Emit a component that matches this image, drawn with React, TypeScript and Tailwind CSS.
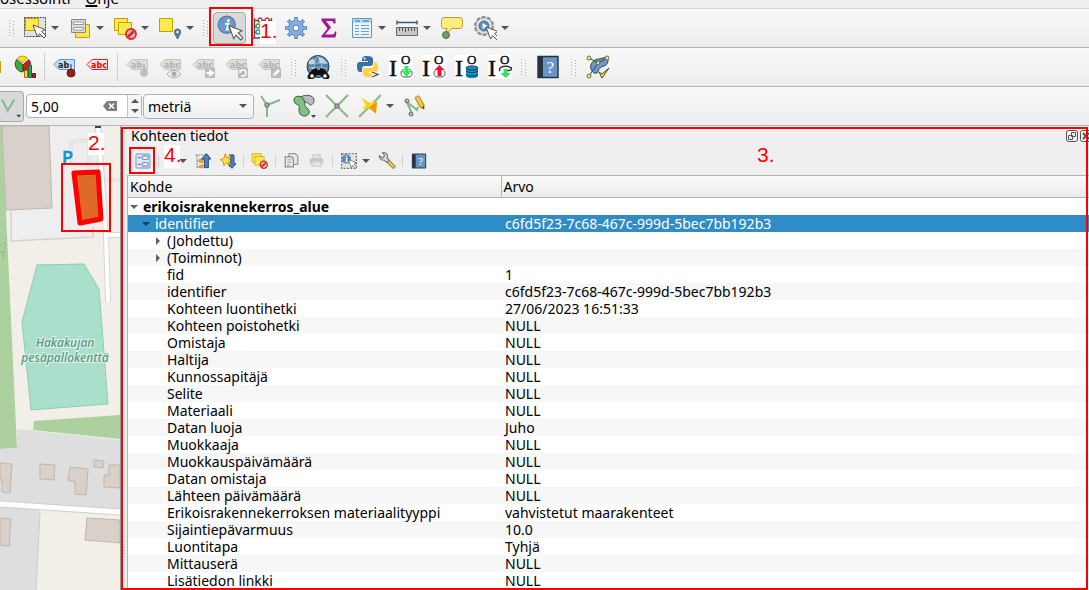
import type { ReactNode } from "react";

const F = "#fce94f";
const FS = "#c4a000";

function Svg({ children, size = 24 }: { children: ReactNode; size?: number }) {
  return (
    <svg width={size} height={size} viewBox="0 0 24 24" fill="none" className="shrink-0" aria-hidden="true">
      {children}
    </svg>
  );
}

function Caret() {
  return (
    <svg width="8" height="4" viewBox="0 0 8 4" className="shrink-0" aria-hidden="true">
      <path d="M0 0h8L4 4z" fill="#555" />
    </svg>
  );
}

function Tool({ label, children, drop = false }: { label: string; children: ReactNode; drop?: boolean }) {
  return (
    <button type="button" aria-label={label} className="flex shrink-0 items-center">
      <span className="flex w-[33px] justify-center">{children}</span>
      {drop && (
        <span className="flex w-3 justify-start">
          <Caret />
        </span>
      )}
    </button>
  );
}

function Grip() {
  return (
    <svg width="5" height="17" viewBox="0 0 5 17" className="mx-[5px] shrink-0" aria-hidden="true">
      <path d="M.5 0v17M4.500 1v16" stroke="#b0b0b0" strokeDasharray="1 2" />
    </svg>
  );
}

function Sep() {
  return <span className="block h-7 w-px shrink-0 bg-[#cfcfcf]" />;
}

function SmallSep() {
  return <span className="mx-[3px] block h-3 w-px shrink-0 bg-[#cfcfcf]" />;
}

const Cursor = ({ x = 0, y = 0 }: { x?: number; y?: number }) => (
  <path
    transform={`translate(${x} ${y})`}
    d="M0 0l4.500 12 2-3.500 4.500 4.500 2-2-4.500-4.500 3.500-2z"
    fill="#fff"
    stroke="#555"
    strokeWidth="1"
  />
);

const NoEntry = ({ x, y, r = 5 }: { x: number; y: number; r?: number }) => (
  <g>
    <circle cx={x} cy={y} r={r} fill="#f3b5b5" stroke="#d42a2a" strokeWidth="1.800" />
    <path d={`M${x - 3} ${y + 3}l6 -6`} stroke="#d42a2a" strokeWidth="2.500" />
  </g>
);

const SelectArea = () => (
  <Svg>
    <path d="M1.500 1.500h21v19h-21z" fill="#e3e3e3" stroke="#444" strokeDasharray="2 1" />
    <path d="M2.500 2.500h13v12h-13z" fill={F} stroke={FS} />
    <Cursor x={10} y={9} />
  </Svg>
);
const SelectForm = () => (
  <Svg>
    <path d="M7.500 8.500h14v13h-14z" fill={F} stroke={FS} />
    <path d="M3.500 3.500h14v13h-14z" fill="#d9dde0" stroke="#888" />
    <path d="M5.500 6h10v2.500h-10zM5.500 11.500h10V14h-10z" fill="#fff" stroke="#999" />
  </Svg>
);
const Deselect = ({ size = 24 }: { size?: number }) => (
  <Svg size={size}>
    <path d="M1.500 2.500h13v12h-13z" fill={F} stroke={FS} />
    <path d="M5.500 6.500h13v12h-13z" fill={F} stroke={FS} />
    <NoEntry x={18} y={18} />
  </Svg>
);
const SelectLocation = () => (
  <Svg>
    <path d="M1.500 2.500h13v13h-13z" fill={F} stroke={FS} />
    <path d="M19.500 23c-2-4-3-5-3-7a3 3 0 0 1 6 0c0 2-1 3-3 7z" fill="#5b7f95" stroke="#4a6a7d" />
    <circle cx="19.500" cy="16" r="1.200" fill="#fff" />
  </Svg>
);
const InfoCursor = () => (
  <Svg size={26}>
    <circle cx="9" cy="9" r="8" fill="#6d97c4" stroke="#4a78ab" />
    <circle cx="10.500" cy="5" r="1.400" fill="#fff" />
    <path d="M7.500 8h3l-1.500 5.500h2" stroke="#fff" strokeWidth="1.800" />
    <Cursor x={11} y={10} />
  </Svg>
);
const Abacus = () => (
  <Svg>
    <path d="M3.500 2v20M20.500 2v20M1 22h22M3 4.500h18M3 10.500h18M3 16.500h18" stroke="#555" strokeWidth="1.300" />
    <g fill="#fff" strokeWidth="1.300">
      <circle cx="9" cy="4" r="2" stroke="#c33" />
      <circle cx="16" cy="4" r="2" stroke="#c33" />
      <circle cx="7" cy="10" r="2" stroke="#3a3" />
      <circle cx="7" cy="16" r="2" stroke="#38c" />
    </g>
  </Svg>
);
const Gear = () => (
  <Svg>
    <path d="M12 1v22M1 12h22M4.200 4.200l15.600 15.600M19.800 4.200L4.200 19.800" stroke="#4e80bd" strokeWidth="3.600" />
    <circle cx="12" cy="12" r="7.500" fill="#86aedb" stroke="#4e80bd" />
    <path d="M12 1.800v20.400M1.800 12h20.400M4.800 4.800l14.400 14.400M19.200 4.800L4.800 19.200" stroke="#86aedb" strokeWidth="2" />
    <circle cx="12" cy="12" r="3" fill="#f5f5f5" stroke="#4e80bd" />
  </Svg>
);
const Sigma = () => (
  <Svg>
    <path d="M4.500 2.500h14v5h-2c0-2-1-2.500-3-2.500H9l5 6.500-6 7h7c2 0 2.500-1 3-3h1.500l-1 6H4.500V20l6-7.500-6-8z" fill="#a0149b" />
  </Svg>
);
const TableIcon = () => (
  <Svg>
    <path d="M2.500 2.500h19v19h-19z" fill="#eaf4fc" stroke="#6b93b5" />
    <path d="M3 3h18v4H3z" fill="#b5dcec" />
    <path d="M5 5h5M13 5h6" stroke="#3d6d94" />
    <path d="M5 9.500h4M11 9.500h8M5 12.500h4M11 12.500h8M5 15.500h4M11 15.500h8M5 18.500h4M11 18.500h8" stroke="#6f9fc6" />
  </Svg>
);
const Ruler = () => (
  <Svg>
    <path d="M2 6.500h20M2 4.500v4M22 4.500v4" stroke="#355a7c" strokeWidth="1.400" />
    <path d="M1.500 11.500h21v8h-21z" fill="#c8c8c8" stroke="#666" />
    <path d="M4.500 12v3M7.500 12v3M10.500 12v4M13.500 12v3M16.500 12v3M19.500 12v3" stroke="#555" />
  </Svg>
);
const MapTip = () => (
  <Svg>
    <path d="M5 1.500h14c3 0 3.500 1 3.500 4v3c0 3-.5 4-3.500 4h-7L6 18l1-5.500H5c-3 0-3.500-1-3.500-4v-3c0-3 .5-4 3.500-4z" fill="#fdec80" stroke="#b79c25" />
    <circle cx="6" cy="19" r="3.500" fill="#6f9c6d" stroke="#477344" />
  </Svg>
);
const Action = () => (
  <Svg>
    <circle cx="11" cy="10" r="8.500" stroke="#888" strokeWidth="3" strokeDasharray="3.900 1.440" />
    <circle cx="11" cy="10" r="8" fill="#e4e4e4" stroke="#aaa" strokeWidth="1" />
    <circle cx="11" cy="10" r="5" fill="#5d8dbd" stroke="#3f6d9f" />
    <path d="M9.500 7l5 3-5 3z" fill="#fff" />
    <Cursor x={13} y={11} />
  </Svg>
);

const Pie = () => (
  <Svg>
    <path d="M10 10L3.500 4.500A8 8 0 0 0 10 17z" fill="#3bab3b" stroke="#222" strokeWidth=".7" />
    <path d="M9 8L4 3.500A7.500 7.500 0 0 1 14.500 3z" fill="#ffe01a" stroke="#9b7b00" strokeWidth=".7" />
    <path d="M10.500 9L16 4.500A8 8 0 0 1 16 14l-6 2z" fill="#cd1f1f" stroke="#222" strokeWidth=".7" />
    <path d="M11.500 15.500h3v7h-3z" fill="#ffe01a" stroke="#a60" />
    <path d="M15.500 10.500h3v12h-3z" fill="#2aa750" stroke="#164" />
    <path d="M19.500 18.500h3v4h-3z" fill="#cd1f1f" stroke="#611" />
  </Svg>
);

const LabelTag = ({ text, fill, stroke, color, children }: { text: string; fill: string; stroke: string; color: string; children?: ReactNode }) => (
  <Svg>
    <path d="M1 9.500L6 4.500h15.500v10H6z" fill={fill} stroke={stroke} />
    <text x="5" y="12.500" fontFamily="DejaVu Sans" fontWeight="700" fontSize="8" fill={color}>
      {text}
    </text>
    {children}
  </Svg>
);
const GrayLabel = ({ text = "abc", children }: { text?: string; children: ReactNode }) => (
  <LabelTag text={text} fill="#dfdfd7" stroke="#c5c5bd" color="#b2b2ae">
    {children}
  </LabelTag>
);

const GlobeSearch = () => (
  <Svg>
    <circle cx="12" cy="11.500" r="11" fill="#5980a6" stroke="#263d52" />
    <path d="M3 6c4-4 6-1 6 1s-4 3-6 2zM13 2c4 0 6 3 8 6-3 2-4-1-6 0s-3-4-2-6zM5 12l5 1-2 4z" fill="#b7cfdf" />
    <path d="M2 8h20M3 13h18M12 1c-5 5-5 12 0 17M12 1c5 5 5 12 0 17" stroke="#d4e3ed" strokeWidth=".6" />
    <path d="M7 14l4-1v2h3v-2l4 1 5 6a3 3 0 0 1-6 3l-3-3h-3l-3 3a3 3 0 0 1-6-3z" fill="#111" />
    <circle cx="6" cy="21" r="2.300" fill="#fff" stroke="#111" />
    <circle cx="19" cy="21" r="2.300" fill="#fff" stroke="#111" />
  </Svg>
);
const Python = () => (
  <Svg>
    <path d="M11 1c-5 0-5 2-5 5h6v1H4c-3 0-3 2-3 5s1 5 3 5h2v-3c0-2 1-3 3-3h5c2 0 3-1 3-3V4c0-2-2-3-6-3z" fill="#3772a3" />
    <path d="M18 7v3c0 2-1 3-4 3H9c-2 0-2 1-2 3v3c0 2 2 3 5 3s5-1 5-3v-1h-5v-1h7c3 0 3-2 3-5s-1-5-4-5z" fill="#ffd040" />
    <circle cx="8.500" cy="3.500" r="1" fill="#fff" />
    <path d="M16 17l6 2.500-6 2.500" stroke="#fff" strokeWidth="3" />
    <path d="M16 17l6 2.500-6 2.500" stroke="#444" strokeWidth="1.300" />
  </Svg>
);
const IOIcon = ({ children }: { children: ReactNode }) => (
  <Svg>
    <path d="M0 0h24v24H0z" fill="#fff" />
    <text x="0" y="21" fontFamily="Liberation Serif" fontSize="24" fill="#111" stroke="#111" strokeWidth=".5">
      I
    </text>
    <text x="12" y="9" fontFamily="Liberation Serif" fontSize="13" fill="#111" stroke="#111" strokeWidth=".4">
      O
    </text>
    {children}
  </Svg>
);
const Book = ({ size = 24 }: { size?: number }) => (
  <Svg size={size}>
    <path d="M2 1.500h20v21H2z" fill="#6695c8" stroke="#26323d" strokeWidth="1.400" />
    <path d="M2 2h5v20H2z" fill="#26323d" />
    <text x="10.500" y="18" fontFamily="Liberation Serif" fontSize="17" fill="#fff">
      ?
    </text>
  </Svg>
);
const Topology = () => (
  <Svg>
    <path d="M5 14c-2-5 3-10 8-10l8-2c2 3 1 8-3 9-3 1-5 2-6 6-3 3-6 0-7-3z" fill="#6c98c6" stroke="#345" />
    <path d="M3 3l9 5 9-5M12 8L3 21" stroke="#345" />
    <g fill="#fbea4f" stroke="#66744a">
      <circle cx="3" cy="3" r="2" />
      <circle cx="21" cy="3" r="2" />
      <circle cx="12" cy="8" r="1.800" />
      <circle cx="3" cy="21" r="2" />
    </g>
    <path d="M13 17l3 2 7-6-7 10z" fill="#fbe44a" stroke="#554a10" />
  </Svg>
);

const g = "#86b889";
const Node = ({ x, y }: { x: number; y: number }) => (
  <rect x={x - 2} y={y - 2} width="4" height="4" rx="1" fill="#aaa" stroke="#666" />
);
const SnapVertex = () => (
  <Svg>
    <path d="M2 2l6 9 13-5M8 11v12" stroke={g} strokeWidth="2" />
    <Node x={8} y={11} />
  </Svg>
);
const Overlap = () => (
  <Svg>
    <path d="M9 3c4-3 13-2 13 3s-4 6-5 4-6-2-8-3z" fill="#bbb" stroke="#555" />
    <path d="M2 6c0-5 8-5 10 0s-1 5 3 8 2 8-2 8-6-2-6-6 1-4-1-5-4-2-4-5z" fill="#82be86" stroke="#345a38" />
    <path d="M19 21h5l-2.500 3z" fill="#444" />
  </Svg>
);
const Cross = () => (
  <Svg>
    <path d="M1 1l22 22M23 1L1 23" stroke={g} strokeWidth="2" />
    <Node x={12} y={12} />
  </Svg>
);
const Bolt = () => (
  <Svg>
    <path d="M23 1L1 23" stroke={g} strokeWidth="2" />
    <path d="M3.500 3.500l8.500 5.500 7-1.500-1 12-7-5.500-7 1 3.500-4z" fill="#fbd21e" />
    <path d="M11 13.500l8-6-1 12-7-5.500z" fill="#e59f00" />
  </Svg>
);
const Trace = () => (
  <Svg>
    <path d="M9 20l-5-12 10 8 1-3" stroke={g} strokeWidth="2" />
    <circle cx="4" cy="7" r="2" fill="#bbb" stroke="#666" />
    <circle cx="8" cy="20" r="2" fill="#bbb" stroke="#666" />
    <path d="M12 4l4-2 5 9v4l-4-2z" fill="#f2c83d" stroke="#a88313" />
    <path d="M11.500 3l4-2 1 2-4 2z" fill="#e09a90" />
    <path d="M19 13l2-1v3z" fill="#333" />
  </Svg>
);

const FormView = () => (
  <Svg size={16}>
    <rect x="1.500" y="1.500" width="21" height="21" rx="2" fill="#dce8f5" stroke="#9ab0c8" strokeWidth="2" />
    <path d="M4 7h5M4 17h5" stroke="#6c88a5" strokeWidth="2" />
    <rect x="11" y="4.500" width="9" height="5" rx="1.500" fill="#fff" stroke="#7d9abd" strokeWidth="2" />
    <rect x="11" y="14.500" width="9" height="5" rx="1.500" fill="#fff" stroke="#7d9abd" strokeWidth="2" />
  </Svg>
);
const TreeBits = () => (
  <g>
    <path d="M1 3h20M3 3v19M3 12h6M3 21h6" stroke="#888" strokeWidth="1.500" strokeDasharray="3 1" />
    <path d="M7 9h5v5H7zM7 18h5v4H7z" fill="#f3b13d" stroke="#bb7911" />
  </g>
);
const Collapse = () => (
  <Svg size={16}>
    <TreeBits />
    <path d="M17 1l7 8h-4v13h-6V9h-4z" fill="#4f80bb" stroke="#244c7d" strokeWidth="1.500" />
  </Svg>
);
const ExpandNew = () => (
  <Svg size={16}>
    <path d="M13 3h8M13 20h4" stroke="#777" strokeWidth="2" />
    <path d="M18 23l-6-7h4V4h5v12h3z" fill="#4f80bb" stroke="#244c7d" strokeWidth="1.500" />
    <path d="M8 1l2 6 6-1-4 5 4 6-6-2-4 4-1-6-5-3 6-2z" fill="#ffe64c" stroke="#d3920c" strokeWidth="1.500" />
  </Svg>
);
const Copy = () => (
  <Svg size={15}>
    <path d="M8 1h10l4 4v13H8z" fill="#e9e9e9" stroke="#9a9a9a" strokeWidth="2" />
    <path d="M2 6h10l3 3v13H2z" fill="#f1f1f1" stroke="#8c8c8c" strokeWidth="2" />
    <path d="M5 11h7M5 15h7M5 19h5" stroke="#aaa" strokeWidth="2" />
  </Svg>
);
const Print = () => (
  <Svg size={15}>
    <path d="M6 3h12v6H6z" fill="#e4e4e4" stroke="#d0d0d0" strokeWidth="2" />
    <rect x="1" y="8" width="22" height="10" rx="4" fill="#c9c9c9" />
    <path d="M5 14h14v7H5z" fill="#e8e8e8" stroke="#cfcfcf" strokeWidth="2" />
  </Svg>
);
const InfoSelect = () => (
  <Svg size={16}>
    <path d="M1 1h22v22H1z" fill="#e4e4e4" stroke="#777" strokeWidth="2" strokeDasharray="3 2" />
    <circle cx="8" cy="9" r="7" fill="#5c8aba" />
    <path d="M8 4v2M7 8h2l-1 5h2" stroke="#fff" strokeWidth="2" />
    <Cursor x={11} y={10} />
  </Svg>
);
const Wrench = () => (
  <Svg size={18}>
    <path d="M12 11l10 10" stroke="#6a5a1a" strokeWidth="5" />
    <path d="M12 11l9.500 9.500" stroke="#e5cf5a" strokeWidth="3" />
    <path d="M2 5l4 3 3-3-3-4c5-1 8 3 6 7l3 3-3 3-4-3c-4 0-7-3-6-6z" fill="#ddd" stroke="#777" strokeWidth="1.500" />
  </Svg>
);

function SmallTool({ label, children }: { label: string; children: ReactNode }) {
  return (
    <button type="button" aria-label={label} className="flex w-[25px] shrink-0 justify-center">
      {children}
    </button>
  );
}

const BAR = "flex items-center border-b border-[#b4b4b4] bg-linear-to-b from-[#f8f8f8] to-[#ededed]";

function SelectionToolbar() {
  return (
    <div role="toolbar" aria-label="Valinta" className={`${BAR} h-10 border-t border-t-[#d4d4d4]`}>
      <span className="flex w-[18px] shrink-0 pl-1"><Grip /></span>
      <Tool label="Valitse kohteita" drop><SelectArea /></Tool>
      <Tool label="Valitse arvolla" drop><SelectForm /></Tool>
      <Tool label="Poista valinta" drop><Deselect /></Tool>
      <Tool label="Valitse sijainnilla" drop><SelectLocation /></Tool>
      <Grip />
      <button type="button" aria-label="Tunnista kohteet" aria-pressed="true" className="flex h-8 w-[33px] shrink-0 items-center justify-center rounded-sm border border-[#a9a9a9] bg-[#d9d9d9]">
        <InfoCursor />
      </button>
      <Tool label="Kenttälaskin"><Abacus /></Tool>
      <Tool label="Työkalut"><Gear /></Tool>
      <Tool label="Tilastot"><Sigma /></Tool>
      <Tool label="Attribuuttitaulu" drop><TableIcon /></Tool>
      <Tool label="Mittaa" drop><Ruler /></Tool>
      <Tool label="Karttavihjeet"><MapTip /></Tool>
      <Tool label="Suorita toiminto" drop><Action /></Tool>
    </div>
  );
}

function LabelToolbar() {
  return (
    <div role="toolbar" aria-label="Nimiöt" className={`${BAR} h-[39px]`}>
      <span className="mr-[7px] h-3 w-px shrink-0 bg-[#c4a000]" />
      <Tool label="Kaavio"><Pie /></Tool>
      <span className="flex w-[7px] shrink-0 justify-center"><Sep /></span>
      <Tool label="Kiinnitä nimiö">
        <LabelTag text="ab" fill="#c5dffa" stroke="#5b93cf" color="#222">
          <path d="M18 9v8" stroke="#888" strokeWidth="2" />
          <circle cx="18" cy="18" r="4" fill="#9a1d1d" stroke="#701010" />
        </LabelTag>
      </Tool>
      <Tool label="Näytä nimiöt"><LabelTag text="abc" fill="#ffe7e7" stroke="#ff1414" color="#e00" /></Tool>
      <span className="flex w-[7px] shrink-0 justify-center"><Sep /></span>
      <Tool label="Kiinnitä"><GrayLabel text="ab"><path d="M18 9v8" stroke="#bbb" strokeWidth="2" /><circle cx="18" cy="18" r="3.500" fill="#cdbcbc" stroke="#bbb" /></GrayLabel></Tool>
      <Tool label="Piilota"><GrayLabel><path d="M8 19c4-5 10-5 14 0-4 5-10 5-14 0z" fill="#eee" stroke="#aaa" /><circle cx="15" cy="19" r="2.500" fill="#aaa" /></GrayLabel></Tool>
      <Tool label="Siirrä"><GrayLabel><path d="M13 13h10v10H13z" fill="#bbb" /><path d="M14.500 18H20m-3-3l4 3-4 3" stroke="#fff" strokeWidth="2" /></GrayLabel></Tool>
      <Tool label="Kierrä"><GrayLabel><path d="M13 13h10v10H13z" fill="#bbb" /><path d="M16 21h2a3 3 0 1 0-3-3v-3" stroke="#fff" strokeWidth="1.500" /></GrayLabel></Tool>
      <Tool label="Muokkaa nimiötä"><GrayLabel><path d="M13 13h10v10H13z" fill="#bbb" /><path d="M15 21l1-3 4-4 2 2-4 4z" fill="#fff" /></GrayLabel></Tool>
      <Grip />
      <Tool label="Hae kartalta"><GlobeSearch /></Tool>
      <span className="ml-[2px]"><Grip /></span>
      <Tool label="Python-konsoli"><Python /></Tool>
      <Tool label="Tuo"><IOIcon><path d="M15 14.500c-4 0-4 7.500 0 7.500h5c4 0 4-7.500 0-7.500" fill="#fff" stroke="#555" /><path d="M15.500 11h4v5h3l-5 6-5-6h3z" fill="#31e561" /></IOIcon></Tool>
      <Tool label="Vie"><IOIcon><path d="M15 14.500c-4 0-4 7.500 0 7.500h5c4 0 4-7.500 0-7.500" fill="#fff" stroke="#555" /><path d="M15.500 21h4v-6h3l-5-5-5 5h3z" fill="#ef1730" /></IOIcon></Tool>
      <Tool label="Tietokanta"><IOIcon><path d="M11 13v8c0 3 12 3 12 0v-8z" fill="#1b8fcd" /><ellipse cx="17" cy="13" rx="6" ry="2" fill="#1b8fcd" stroke="#0b3853" /><path d="M11 16c2 2 10 2 12 0M11 19.500c2 2 10 2 12 0" stroke="#0b3853" /></IOIcon></Tool>
      <Tool label="Synkronoi"><IOIcon><path d="M12 16c-3-5 8-6 11-3M23 12c2 4-3 4-5 3" stroke="#333" strokeWidth="1.500" /><path d="M15.500 14h4v4h3l-5 5-5-5h3z" fill="#31e561" /></IOIcon></Tool>
      <Grip />
      <Tool label="Ohje"><Book /></Tool>
      <span className="ml-[2px]"><Grip /></span>
      <Tool label="Topologian tarkistus"><Topology /></Tool>
    </div>
  );
}

function SnappingToolbar() {
  return (
    <div role="toolbar" aria-label="Tartunta" className={`${BAR} h-[39px]`}>
      <button type="button" aria-label="Tartunta kärkipisteeseen" aria-pressed="true" className="mr-[2px] flex h-[31px] w-6 shrink-0 items-center rounded-r-sm border border-l-0 border-[#a9a9a9] bg-[#d9d9d9]">
        <svg width="24" height="28" viewBox="0 0 24 28" fill="none" aria-hidden="true">
          <path d="M2 7l6 12 7-12" stroke="#86b889" strokeWidth="2" />
          <path d="M17 23h5l-2.500 3z" fill="#444" />
        </svg>
      </button>
      <label className="flex h-6 w-[116px] shrink-0 items-center rounded-sm border border-[#b0b0b0] bg-white">
        <input aria-label="Toleranssi" defaultValue="5,00" className="w-[76px] bg-transparent pl-1 text-[14px] outline-none" />
        <svg width="14" height="10" viewBox="0 0 14 10" className="mr-[10px] shrink-0" aria-hidden="true">
          <path d="M4 0h10v10H4L0 5z" fill="#7d7d7d" />
          <path d="M6 2.500l5 5M11 2.500l-5 5" stroke="#fff" strokeWidth="1.500" />
        </svg>
        <span className="flex h-full flex-1 items-center justify-center border-l border-[#c4c4c4] bg-[#f5f5f5]">
          <svg width="8" height="14" viewBox="0 0 8 14" aria-hidden="true">
            <path d="M0 4h8L4 0zM0 10h8l-4 4z" fill="#555" />
          </svg>
        </span>
      </label>
      <span className="ml-px grid w-[111px] shrink-0 items-center">
        <select aria-label="Yksikkö" className="col-start-1 row-start-1 h-[25px] appearance-none rounded-sm border border-[#b0b0b0] bg-linear-to-b from-[#fcfcfc] to-[#f0f0f0] pl-1 text-[14px] outline-none">
          <option>metriä</option>
        </select>
        <span className="pointer-events-none col-start-1 row-start-1 mr-[7px] justify-self-end"><Caret /></span>
      </span>
      <Tool label="Topologinen muokkaus"><SnapVertex /></Tool>
      <Tool label="Päällekkäisyys"><Overlap /></Tool>
      <Tool label="Leikkauspisteet"><Cross /></Tool>
      <Tool label="Jäljitys" drop><Bolt /></Tool>
      <Tool label="Itsetartunta"><Trace /></Tool>
    </div>
  );
}

function MapView() {
  return (
    <svg viewBox="0 126 120 464" preserveAspectRatio="xMinYMin slice" className="block w-full flex-1" fill="none" role="img" aria-label="Kartta">
      <path d="M0 126h120v464H0z" fill="#f2efe9" />
      <path d="M0 126h2l15 322-17 1z" fill="#add19e" />
      <path d="M3 126h102v61l-13 53-81 1z" fill="#eee" />
      <path d="M11 208v33l82-4v-10" stroke="#dccfcf" strokeWidth="1.500" />
      <path d="M71 164v-22l18-2v30l14 10h17" stroke="#d9d9d9" strokeWidth="3" />
      <path d="M71 164v-22l18-2v30l14 10h17" stroke="#f7f7f7" />
      <path d="M98 126l8 110 2 66M106 235h14" stroke="#d8d5d3" strokeWidth="6" />
      <path d="M98 126l8 110 2 66M106 235h14" stroke="#fff" strokeWidth="4" />
      <path d="M95 126h6v2h-6z" fill="#444" />
      <path d="M2 126h47l3 82-46 2z" fill="#d9d0c9" stroke="#c5b5aa" />
      <path d="M17 429l103 11v70L0 502v-53l17-1z" fill="#dedede" />
      <path d="M0 502l40 5-4 83H0z" fill="#dedede" />
      <path d="M34 421l86-6v24l-87-9z" fill="#add19e" />
      <path d="M37 265l47-1 15 25 9 115-77 6-9-88z" fill="#aae0cb" stroke="#8fcdb5" />
      <path d="M0 504l120 8" stroke="#cfcfcf" strokeWidth="7" />
      <path d="M0 504l120 8" stroke="#fff" strokeWidth="5" />
      <path d="M40 512l-4 78" stroke="#ccc" />
      <path d="M0 463l12 1-2 29-8-1v-12H0zM40 464l15 1-1 15-14-1zM70 467l18 2-2 26-11-1v-12l-7-2zM94 460l10 1-1 7-9-1zM109 465h11v23l-16-1v-12h5zM87 518l33 2v23l-35-3zM0 518l11 1-2 27-9-1z" fill="#d9d0c9" stroke="#c5b5aa" />
      <path d="M0 246l5-4v10H0M3 252v7" stroke="#8fb983" />
      <g fontFamily="Noto Sans" fontStyle="italic" fontWeight="500" fontSize="12" fill="#549780" textAnchor="middle" stroke="#dff2ea" strokeWidth="2" paintOrder="stroke">
        <text x="65" y="347">Hakakujan</text>
        <text x="65" y="362">pesäpallokenttä</text>
      </g>
      <text x="62" y="164" fontFamily="Noto Sans" fontWeight="500" fontSize="18" fill="#0b92da" stroke="#0b92da" strokeWidth=".5">P</text>
      <path d="M74 173l24-1 3 47-21 4z" fill="#dd6a29" stroke="#f00" strokeWidth="5" strokeLinejoin="round" />
    </svg>
  );
}

type Row = { name: string; value?: string; level: number; open?: boolean };

const rows: Row[] = [
  { name: "erikoisrakennekerros_alue", level: 0, open: true },
  { name: "identifier", value: "c6fd5f23-7c68-467c-999d-5bec7bb192b3", level: 1, open: true },
  { name: "(Johdettu)", level: 2, open: false },
  { name: "(Toiminnot)", level: 2, open: false },
  { name: "fid", value: "1", level: 2 },
  { name: "identifier", value: "c6fd5f23-7c68-467c-999d-5bec7bb192b3", level: 2 },
  { name: "Kohteen luontihetki", value: "27/06/2023 16:51:33", level: 2 },
  { name: "Kohteen poistohetki", value: "NULL", level: 2 },
  { name: "Omistaja", value: "NULL", level: 2 },
  { name: "Haltija", value: "NULL", level: 2 },
  { name: "Kunnossapitäjä", value: "NULL", level: 2 },
  { name: "Selite", value: "NULL", level: 2 },
  { name: "Materiaali", value: "NULL", level: 2 },
  { name: "Datan luoja", value: "Juho", level: 2 },
  { name: "Muokkaaja", value: "NULL", level: 2 },
  { name: "Muokkauspäivämäärä", value: "NULL", level: 2 },
  { name: "Datan omistaja", value: "NULL", level: 2 },
  { name: "Lähteen päivämäärä", value: "NULL", level: 2 },
  { name: "Erikoisrakennekerroksen materiaalityyppi", value: "vahvistetut maarakenteet", level: 2 },
  { name: "Sijaintiepävarmuus", value: "10.0", level: 2 },
  { name: "Luontitapa", value: "Tyhjä", level: 2 },
  { name: "Mittauserä", value: "NULL", level: 2 },
  { name: "Lisätiedon linkki", value: "NULL", level: 2 },
];

const indents = ["pl-px", "pl-[13px]", "pl-[25px]"];

function AttributeTable() {
  return (
    <table className="w-full table-fixed border-collapse text-left text-[14px] leading-[17px]">
      <colgroup>
        <col className="w-[373px]" />
        <col />
      </colgroup>
      <thead>
        <tr className="h-[22px] bg-linear-to-b from-[#fbfbfb] to-[#eaeaea]">
          <th className="border-y border-r border-[#b4b4b4] p-0 pl-[2px] font-normal">Kohde</th>
          <th className="border-y border-[#b4b4b4] p-0 pl-[2px] font-normal">Arvo</th>
        </tr>
      </thead>
      <tbody>
        {rows.map((r, i) => (
          <tr key={i} className={`h-[17px] ${i === 1 ? "bg-[#308cc6] text-white" : i % 2 ? "bg-[#f7f7f7]" : "bg-white"}`}>
            <td className="p-0">
              <div className={`flex h-[17px] items-center whitespace-nowrap ${indents[r.level]} ${r.level === 0 ? "font-bold" : ""}`}>
                <svg width="10" height="8" viewBox="0 0 10 8" className="mr-1 shrink-0" aria-hidden="true">
                  {r.open === true && <path d="M1 2h8L5 6z" fill={i === 1 ? "#173f5c" : "#606060"} />}
                  {r.open === false && <path d="M3 0l4 4-4 4z" fill="#606060" />}
                </svg>
                {r.name}
              </div>
            </td>
            <td className="p-0 pl-1 whitespace-nowrap">
              <div className="h-[17px]">{r.value}</div>
            </td>
          </tr>
        ))}
      </tbody>
    </table>
  );
}

function IdentifyPanel() {
  return (
    <section aria-label="Kohteen tiedot" className="flex min-w-0 flex-1 flex-col">
      <header className="flex h-5 items-start pl-1">
        <h2 className="flex-1 text-[14px] leading-[19px]">Kohteen tiedot</h2>
        <button type="button" aria-label="Irrota paneeli" className="mt-1 mr-[2px]">
          <svg width="12" height="12" viewBox="0 0 12 12" fill="none" stroke="#555" aria-hidden="true">
            <rect x=".5" y=".5" width="11" height="11" rx="2" />
            <path d="M5.500 2.500h4v4h-4zM2.500 5.500h4v4h-4z" />
          </svg>
        </button>
        <button type="button" aria-label="Sulje paneeli" className="mt-1 -mr-[3px]">
          <svg width="12" height="12" viewBox="0 0 12 12" fill="none" stroke="#555" aria-hidden="true">
            <rect x=".5" y=".5" width="11" height="11" rx="2" />
            <path d="M3 3l6 6M9 3L3 9" strokeWidth="2" />
          </svg>
        </button>
      </header>
      <div role="toolbar" aria-label="Tunnistustyökalut" className="flex h-[29px] items-center pl-[3px]">
        <SmallTool label="Lomakenäkymä"><FormView /></SmallTool>
        <SmallSep />
        <button type="button" aria-label="Laajenna puu" className="flex w-[25px] shrink-0 items-center justify-end"><Svg size={12}><TreeBits /></Svg><Caret /></button>
        <span className="w-[3px]" />
        <SmallTool label="Tiivistä puu"><Collapse /></SmallTool>
        <SmallTool label="Laajenna uudet"><ExpandNew /></SmallTool>
        <SmallSep />
        <SmallTool label="Tyhjennä tulokset"><Deselect size={17} /></SmallTool>
        <SmallSep />
        <SmallTool label="Kopioi"><Copy /></SmallTool>
        <SmallTool label="Tulosta"><Print /></SmallTool>
        <SmallSep />
        <SmallTool label="Tunnistustila"><InfoSelect /></SmallTool>
        <span className="mr-1 ml-px"><Caret /></span>
        <SmallTool label="Asetukset"><Wrench /></SmallTool>
        <SmallSep />
        <SmallTool label="Ohje"><Book size={16} /></SmallTool>
      </div>
      <div className="flex-1 border-l border-[#b4b4b4] bg-white">
        <AttributeTable />
      </div>
    </section>
  );
}

function Annotations() {
  return (
    <div className="pointer-events-none text-[21px] leading-5 text-[#f00] [font-family:'Liberation_Sans',sans-serif]">
      <div className="absolute top-[7px] left-[209px] h-[39px] w-11 border-2 border-[#f00]" />
      <div className="absolute top-[21px] left-[260px] w-4 bg-white pb-[3px]">1.</div>
      <div className="absolute top-[163px] left-[61px] h-[69px] w-[50px] border-2 border-[#f00]" />
      <div className="absolute top-[133px] left-[88px] w-4 bg-white pb-[2px]">2.</div>
      <div className="absolute top-[127px] right-px bottom-0 left-[121px] border-2 border-[#f00]" />
      <div className="absolute top-[145px] left-[757px]">3.</div>
      <div className="absolute top-[147px] left-[129px] h-[27px] w-[26px] border-2 border-[#f00]" />
      <div className="absolute top-[145px] left-[164px] w-4 bg-white pb-[3px]">4.</div>
    </div>
  );
}

export default function App() {
  return (
    <div className="relative flex min-h-screen flex-col overflow-hidden bg-[#efefef] text-black [font-family:'Noto_Sans',sans-serif]">
      <nav aria-label="Valikko" className="flex h-2 items-end gap-[15px] overflow-hidden text-[15px] leading-5">
        <a href="#prosessointi" className="-ml-[15px]">Prosessointi</a>
        <a href="#ohje"><span className="underline decoration-2">O</span>hje</a>
      </nav>
      <SelectionToolbar />
      <LabelToolbar />
      <SnappingToolbar />
      <main className="flex flex-1">
        <div className="flex w-[121px] shrink-0 flex-col border-r border-[#999]">
          <MapView />
        </div>
        <div className="flex w-[6px] shrink-0 items-end justify-end pb-8">
          <svg width="3" height="17" viewBox="0 0 3 17" aria-hidden="true">
            <path d="M.5 0v17" stroke="#b0b0b0" strokeDasharray="1 2" />
          </svg>
        </div>
        <IdentifyPanel />
      </main>
      <Annotations />
    </div>
  );
}
